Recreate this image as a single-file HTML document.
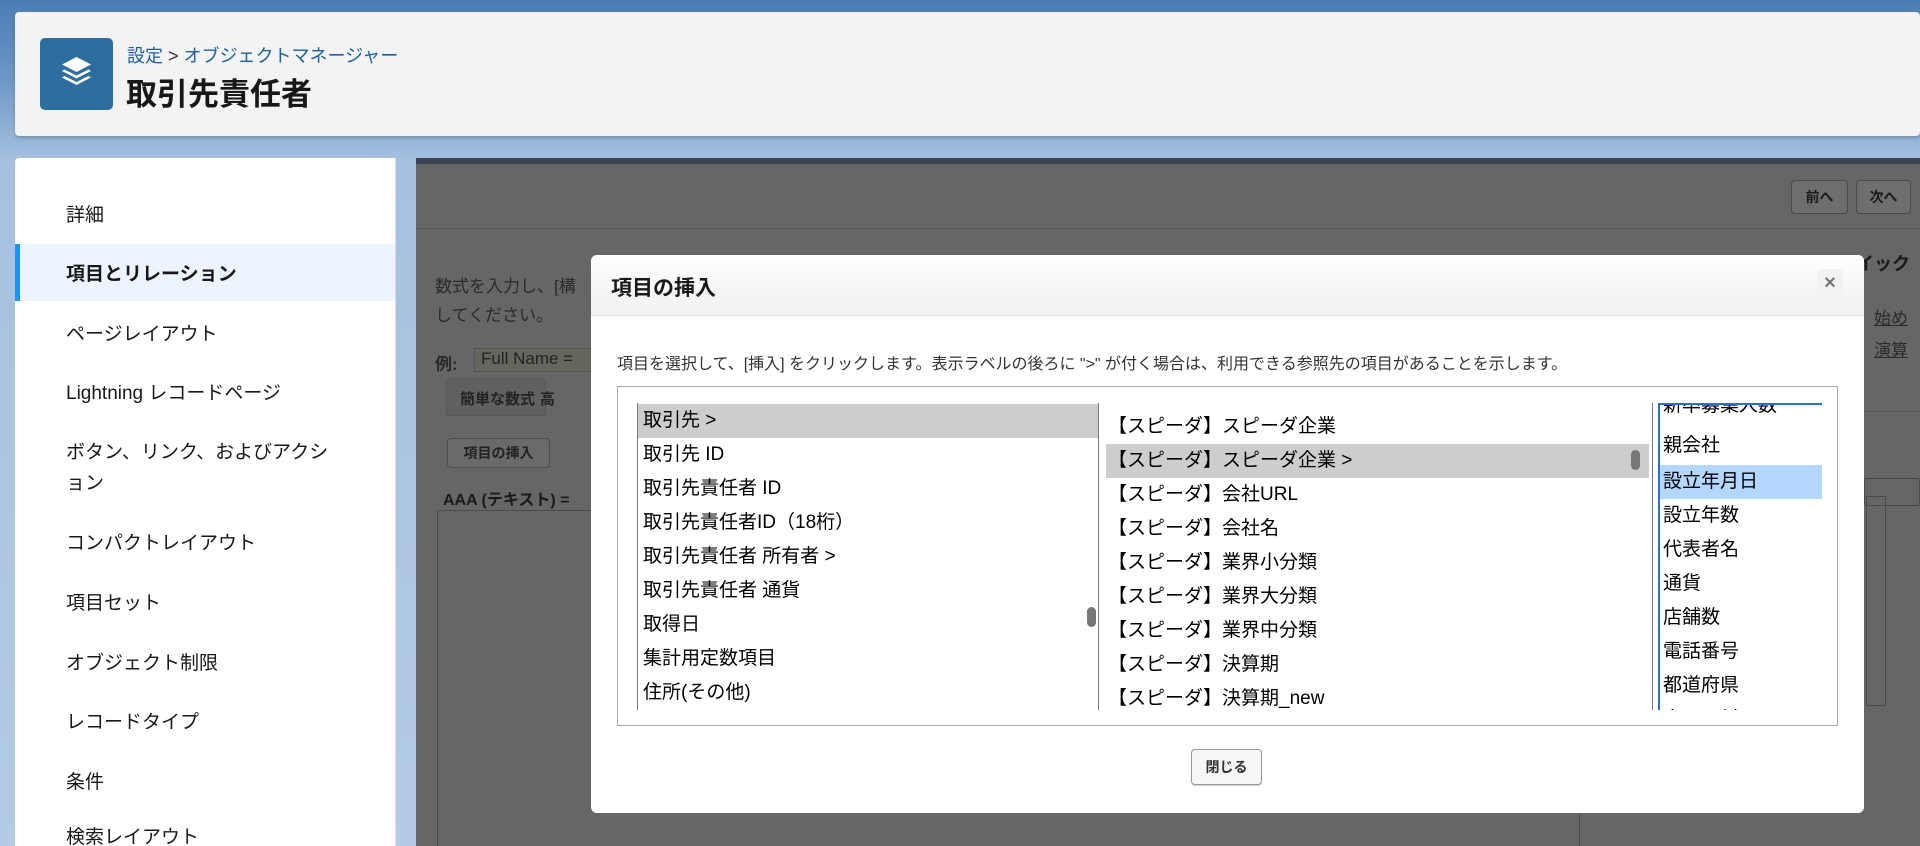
<!DOCTYPE html>
<html style="width:1920px;height:846px;overflow:hidden"><head><meta charset="utf-8"><style>
*{margin:0;padding:0;box-sizing:border-box}
body{width:1920px;height:846px;overflow:hidden;position:relative;font-family:"Liberation Sans","Noto Sans CJK JP",sans-serif;background:linear-gradient(#4a7cb4 0px,#6e97c6 80px,#a6c0df 160px,#b3cbe6 846px);color:#181818}
.a{position:absolute;white-space:nowrap}
.hdr{left:15px;top:12px;width:1905px;height:124px;background:#f3f3f3;border-radius:4px;box-shadow:0 2px 3px rgba(0,0,0,.2)}
.side{left:15px;top:158px;width:381px;height:688px;background:#fff;border-radius:4px 0 0 0;border-right:1px solid #ddd;overflow:hidden}
.side div{position:absolute;left:51px;font-size:19px;color:#181818}
.main{left:416px;top:158px;width:1504px;height:688px;background:#666;overflow:hidden}
.dk{font-size:17px;color:#2a2a2a}
.modal{left:591px;top:255px;width:1273px;height:558px;background:#fff;border-radius:6px;overflow:hidden}
.mh{position:absolute;left:0;top:0;width:100%;height:61px;background:linear-gradient(#fff,#f0f0f0);border-bottom:1px solid #e2e2e2}
.row{position:absolute;height:34px;line-height:34px;font-size:19px;color:#000}
.btn{position:absolute;border:1px solid #999;border-radius:4px;background:#f2f2f2;font-size:14px;font-weight:bold;text-align:center;color:#333}
</style></head><body>
<div class="a hdr"></div>
<div class="a" style="left:40px;top:38px;width:73px;height:72px;background:#2e6e9e;border-radius:5px">
<svg width="73" height="72" viewBox="0 0 73 72"><g fill="#fff"><path d="M36.5 19 L51 26.5 L36.5 34 L22 26.5Z"/><path d="M24.5 31.5 L36.5 37.5 L48.5 31.5 L51 33 L36.5 40.5 L22 33Z"/><path d="M24.5 38 L36.5 44 L48.5 38 L51 39.5 L36.5 47 L22 39.5Z"/></g></svg></div>
<div class="a" style="left:127px;top:42px;font-size:18px;color:#1b5f9e">設定 <span style="color:#333">&gt;</span> オブジェクトマネージャー</div>
<div class="a" style="left:126px;top:69px;font-size:31px;font-weight:bold;color:#181818">取引先責任者</div>

<div class="a side">
<div style="top:42px">詳細</div>
<div style="left:0;top:86px;width:380px;height:57px;background:#eef4ff;border-left:5px solid #1b96ff"></div>
<div style="top:101px;font-weight:bold">項目とリレーション</div>
<div style="top:161px">ページレイアウト</div>
<div style="top:220px">Lightning レコードページ</div>
<div style="top:279px;line-height:31px">ボタン、リンク、およびアクシ<br>ョン</div>
<div style="top:370px">コンパクトレイアウト</div>
<div style="top:430px">項目セット</div>
<div style="top:490px">オブジェクト制限</div>
<div style="top:549px">レコードタイプ</div>
<div style="top:609px">条件</div>
<div style="top:664px">検索レイアウト</div>
</div>

<div class="a main">
<div class="a" style="left:0;top:0;width:1504px;height:6px;background:#3b4150"></div>
<div class="a" style="left:0;top:70px;width:1504px;height:1px;background:#5a5a5a"></div>
<div class="btn" style="left:1375px;top:22px;width:57px;height:34px;line-height:32px;background:#6e6e6e;border-color:#4a4a4a;color:#1a1a1a">前へ</div>
<div class="btn" style="left:1440px;top:22px;width:55px;height:34px;line-height:32px;background:#6e6e6e;border-color:#4a4a4a;color:#1a1a1a">次へ</div>
<div class="a dk" style="left:19px;top:114px">数式を入力し、[構</div>
<div class="a dk" style="left:19px;top:143px">してください。</div>
<div class="a dk" style="left:19px;top:192px;font-weight:bold">例:</div>
<div class="a" style="left:58px;top:190px;width:140px;height:24px;border:1px solid #555;background:#66665e;font-size:17px;color:#222;padding-left:6px">Full Name =</div>
<div class="a" style="left:30px;top:220px;width:100px;height:38px;background:#606060;border:1px solid #575757;border-radius:4px 4px 0 0"></div>
<div class="a" style="left:44px;top:230px;font-size:15px;font-weight:bold;color:#222">簡単な数式</div>
<div class="a" style="left:124px;top:230px;font-size:15px;font-weight:bold;color:#222">高</div>
<div class="btn" style="left:31px;top:280px;width:103px;height:30px;line-height:28px;background:#6a6a6a;border-color:#4e4e4e;color:#222">項目の挿入</div>
<div class="a" style="left:27px;top:328px;font-size:16px;font-weight:bold;color:#1a1a1a">AAA (テキスト) =</div>
<div class="a" style="left:21px;top:352px;width:1143px;height:400px;border:1px solid #4a4a4a"></div>
<div class="a dk" style="left:1440px;top:92px;font-weight:bold;font-size:18px;color:#1a1a1a">イック</div>
<div class="a dk" style="left:1458px;top:146px;text-decoration:underline">始め</div>
<div class="a dk" style="left:1458px;top:178px;text-decoration:underline">演算</div>
<div class="a" style="left:1448px;top:253px;width:56px;height:1px;background:#555"></div>
<div class="a" style="left:1448px;top:320px;width:56px;height:28px;border:1px solid #4a4a4a;border-radius:3px"></div>
<div class="a" style="left:1450px;top:338px;width:20px;height:210px;border:1px solid #4a4a4a"></div>
</div>

<div class="a modal">
<div class="mh"></div>
<div class="a" style="left:20px;top:17px;font-size:21px;font-weight:bold;color:#1a1a1a">項目の挿入</div>
<div class="a" style="left:1226px;top:14px;width:26px;height:28px;background:#f2f2f2;border-radius:3px;text-align:center;line-height:28px;font-size:20px;font-weight:bold;color:#777">×</div>
<div class="a" style="left:26px;top:95px;font-size:16px;color:#333">項目を選択して、[挿入] をクリックします。表示ラベルの後ろに "&gt;" が付く場合は、利用できる参照先の項目があることを示します。</div>
<div class="a" style="left:26px;top:131px;width:1221px;height:340px;border:1px solid #aaa"></div>
<div class="a" style="left:46px;top:148px;width:462px;height:307px;border-left:1px solid #777;overflow:hidden">
<div class="row" style="left:0;top:1px;width:460px;background:#cdcdcd"></div>
<div class="row" style="left:5px;top:1px">取引先 &gt;</div>
<div class="row" style="left:5px;top:35px">取引先 ID</div>
<div class="row" style="left:5px;top:69px">取引先責任者 ID</div>
<div class="row" style="left:5px;top:103px">取引先責任者ID（18桁）</div>
<div class="row" style="left:5px;top:137px">取引先責任者 所有者 &gt;</div>
<div class="row" style="left:5px;top:171px">取引先責任者 通貨</div>
<div class="row" style="left:5px;top:205px">取得日</div>
<div class="row" style="left:5px;top:239px">集計用定数項目</div>
<div class="row" style="left:5px;top:273px">住所(その他)</div>
<div class="a" style="left:449px;top:204px;width:9px;height:20px;background:#777;border-radius:5px"></div>
</div>
<div class="a" style="left:507px;top:148px;width:1px;height:307px;background:#777"></div>
<div class="a" style="left:515px;top:148px;width:545px;height:307px;overflow:hidden">
<div class="row" style="left:0;top:41px;width:543px;background:#cdcdcd"></div>
<div class="row" style="left:2px;top:7px">【スピーダ】スピーダ企業</div>
<div class="row" style="left:2px;top:41px">【スピーダ】スピーダ企業 &gt;</div>
<div class="row" style="left:2px;top:75px">【スピーダ】会社URL</div>
<div class="row" style="left:2px;top:109px">【スピーダ】会社名</div>
<div class="row" style="left:2px;top:143px">【スピーダ】業界小分類</div>
<div class="row" style="left:2px;top:177px">【スピーダ】業界大分類</div>
<div class="row" style="left:2px;top:211px">【スピーダ】業界中分類</div>
<div class="row" style="left:2px;top:245px">【スピーダ】決算期</div>
<div class="row" style="left:2px;top:279px">【スピーダ】決算期_new</div>
<div class="a" style="left:525px;top:47px;width:9px;height:20px;background:#777;border-radius:5px"></div>
</div>
<div class="a" style="left:1061px;top:148px;width:1px;height:307px;background:#777"></div>
<div class="a" style="left:1067px;top:148px;width:164px;height:307px;border-left:2px solid #2a6fd0;border-top:2px solid #2a6fd0;overflow:hidden">
<div class="row" style="left:0;top:60px;width:162px;background:#b3d7ff"></div>
<div class="row" style="left:3px;top:-16px">新卒募集人数</div>
<div class="row" style="left:3px;top:24px">親会社</div>
<div class="row" style="left:3px;top:60px">設立年月日</div>
<div class="row" style="left:3px;top:94px">設立年数</div>
<div class="row" style="left:3px;top:128px">代表者名</div>
<div class="row" style="left:3px;top:162px">通貨</div>
<div class="row" style="left:3px;top:196px">店舗数</div>
<div class="row" style="left:3px;top:230px">電話番号</div>
<div class="row" style="left:3px;top:264px">都道府県</div>
<div class="row" style="left:3px;top:298px">市区町村</div>
</div>
<div class="btn" style="left:600px;top:494px;width:71px;height:36px;line-height:34px;background:#f6f6f6;box-shadow:0 1px 1px rgba(0,0,0,.2)">閉じる</div>
</div>
</body></html>
